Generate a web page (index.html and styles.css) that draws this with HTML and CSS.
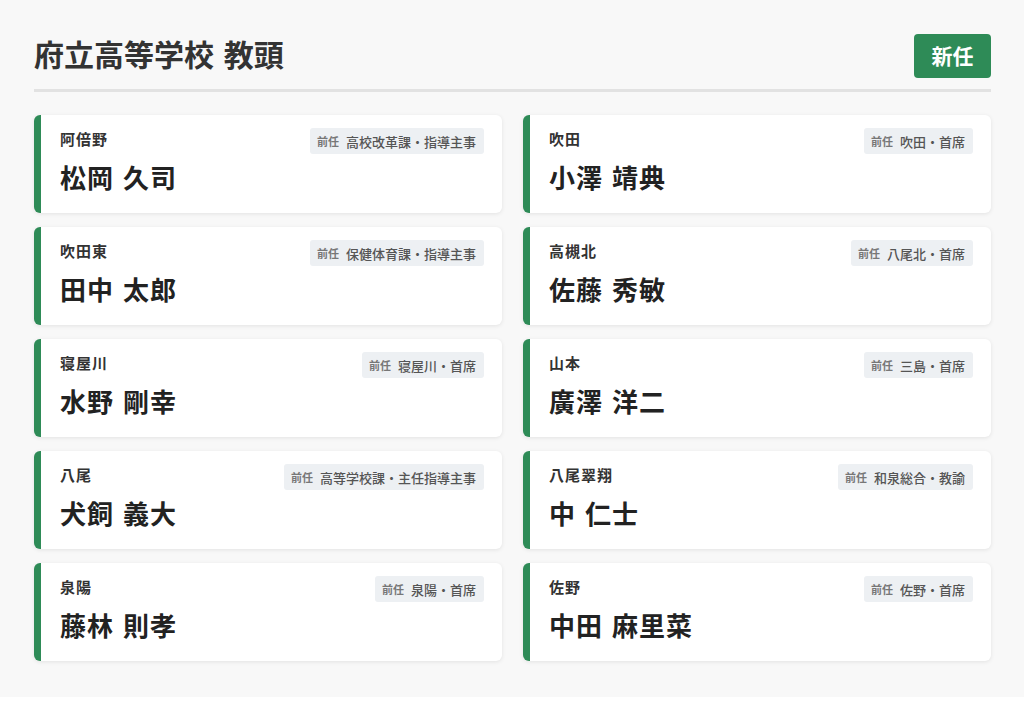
FILE: index.html
```html
<!DOCTYPE html>
<html lang="ja">
<head>
<meta charset="utf-8">
<title>府立高等学校 教頭</title>
<link rel="stylesheet" href="styles.css">
</head>
<body>
<main class="page">
  <header class="header">
    <h1 class="title">府立高等学校 教頭</h1>
    <span class="badge">新任</span>
  </header>
  <section class="grid">
    <article class="card"><div class="card-top"><span class="school">阿倍野</span><span class="tag"><span class="tag-key">前任</span><span class="tag-val">高校改革課・指導主事</span></span></div><div class="name">松岡 久司</div></article>
    <article class="card"><div class="card-top"><span class="school">吹田</span><span class="tag"><span class="tag-key">前任</span><span class="tag-val">吹田・首席</span></span></div><div class="name">小澤 靖典</div></article>
    <article class="card"><div class="card-top"><span class="school">吹田東</span><span class="tag"><span class="tag-key">前任</span><span class="tag-val">保健体育課・指導主事</span></span></div><div class="name">田中 太郎</div></article>
    <article class="card"><div class="card-top"><span class="school">高槻北</span><span class="tag"><span class="tag-key">前任</span><span class="tag-val">八尾北・首席</span></span></div><div class="name">佐藤 秀敏</div></article>
    <article class="card"><div class="card-top"><span class="school">寝屋川</span><span class="tag"><span class="tag-key">前任</span><span class="tag-val">寝屋川・首席</span></span></div><div class="name">水野 剛幸</div></article>
    <article class="card"><div class="card-top"><span class="school">山本</span><span class="tag"><span class="tag-key">前任</span><span class="tag-val">三島・首席</span></span></div><div class="name">廣澤 洋二</div></article>
    <article class="card"><div class="card-top"><span class="school">八尾</span><span class="tag"><span class="tag-key">前任</span><span class="tag-val">高等学校課・主任指導主事</span></span></div><div class="name">犬飼 義大</div></article>
    <article class="card"><div class="card-top"><span class="school">八尾翠翔</span><span class="tag"><span class="tag-key">前任</span><span class="tag-val">和泉総合・教諭</span></span></div><div class="name">中 仁士</div></article>
    <article class="card"><div class="card-top"><span class="school">泉陽</span><span class="tag"><span class="tag-key">前任</span><span class="tag-val">泉陽・首席</span></span></div><div class="name">藤林 則孝</div></article>
    <article class="card"><div class="card-top"><span class="school">佐野</span><span class="tag"><span class="tag-key">前任</span><span class="tag-val">佐野・首席</span></span></div><div class="name">中田 麻里菜</div></article>
  </section>
</main>
</body>
</html>
```

FILE: styles.css
```css
* { box-sizing: border-box; }
html, body { margin: 0; padding: 0; background: #ffffff; }
body {
  font-family: "Noto Sans CJK JP", "Noto Sans", sans-serif;
  color: #333;
}
.page {
  width: 1024px;
  background: #f8f8f8;
  padding: 34px 33px 36px 34px;
}
.header {
  display: flex;
  align-items: flex-start;
  justify-content: space-between;
  padding-bottom: 11px;
  border-bottom: 3px solid #e2e2e2;
  margin-bottom: 23px;
}
.title {
  margin: 0;
  font-size: 30px;
  font-weight: 700;
  letter-spacing: 0;
  word-spacing: 3px;
  color: #333;
  line-height: 38px;
}
.badge {
  display: flex;
  align-items: center;
  justify-content: center;
  width: 77px;
  height: 44px;
  padding-bottom: 3px;
  background: #2e8b57;
  color: #fff;
  border-radius: 4px;
  font-size: 21px;
  font-weight: 700;
}
.grid {
  display: grid;
  grid-template-columns: 1fr 1fr;
  column-gap: 21px;
  row-gap: 14px;
}
.card {
  background: #fff;
  border-left: 7px solid #2e8b57;
  border-radius: 6px;
  box-shadow: 0 1px 4px rgba(0, 0, 0, 0.09);
  padding: 13px 18px 18px 19px;
  height: 98px;
}
.card-top {
  display: flex;
  align-items: flex-start;
  justify-content: space-between;
  height: 26px;
}
.school {
  font-size: 15px;
  line-height: 22px;
  font-weight: 700;
  letter-spacing: 1px;
  color: #333;
}
.tag {
  display: flex;
  align-items: center;
  height: 26px;
  padding: 0 8px 0 7px;
  background: #edf0f3;
  border-radius: 3px;
  color: #555;
}
.tag-key {
  font-size: 11px;
  font-weight: 700;
  color: #777;
  margin-right: 7px;
}
.tag-val {
  font-size: 13px;
  font-weight: 500;
  color: #555;
}
.name {
  margin-top: 8px;
  font-size: 26px;
  line-height: 30px;
  font-weight: 700;
  letter-spacing: 1px;
  word-spacing: 2px;
  color: #222;
}
```
